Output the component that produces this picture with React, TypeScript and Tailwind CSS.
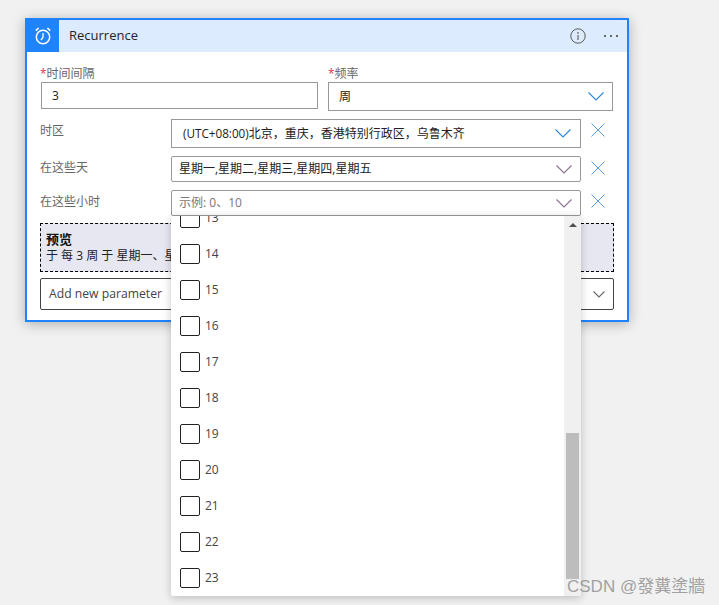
import React from "react";

const font = { fontFamily: '"Open Sans", "Noto Sans CJK SC", sans-serif' };

function Chevron({ w = 16, h = 8, color }: { w?: number; h?: number; color: string }) {
  return (
    <svg width={w} height={h + 1} viewBox={`0 0 ${w} ${h + 1}`} fill="none" className="shrink-0">
      <path d={`M0.5 0.5 L${w / 2} ${h} L${w - 0.5} 0.5`} stroke={color} strokeWidth="1.1" />
    </svg>
  );
}

function Cross() {
  return (
    <svg width="14" height="14" viewBox="0 0 14 14" fill="none" className="shrink-0">
      <path d="M0.5 0.5 L13.5 13.5 M13.5 0.5 L0.5 13.5" stroke="#5b9be4" strokeWidth="1" />
    </svg>
  );
}

function AlarmIcon() {
  return (
    <svg width="16" height="18" viewBox="0 0 16 18" fill="none">
      <circle cx="8" cy="10" r="6.7" stroke="white" strokeWidth="1.5" />
      <path d="M8 6 V10.2 L6 13" stroke="white" strokeWidth="1.3" />
      <path d="M0.8 3.6 L3.6 1 M15.2 3.6 L12.4 1" stroke="white" strokeWidth="1.6" />
    </svg>
  );
}

function InfoIcon() {
  return (
    <svg width="16" height="16" viewBox="0 0 16 16" fill="none">
      <circle cx="8" cy="8" r="7.2" stroke="#5a5a5a" strokeWidth="1" />
      <path d="M8 7 V12" stroke="#5a5a5a" strokeWidth="1.1" />
      <circle cx="8" cy="4.9" r="0.8" fill="#5a5a5a" />
    </svg>
  );
}

const hours = ["13", "14", "15", "16", "17", "18", "19", "20", "21", "22", "23"];

export default function App() {
  return (
    <div
      className="relative h-[605px] w-[719px] overflow-hidden bg-[#f1f1f1] pl-[25px] pt-[18px] text-[12px] text-[#333]"
      style={font}
    >
      <div className="w-[604px] border-2 border-[#1f84fb] bg-white shadow-[0_2px_12px_rgba(0,0,0,0.28)]">
        <div className="flex h-8 items-center bg-[#dcebfe]">
          <div className="flex h-8 w-8 items-center justify-center bg-[#1f84fb]">
            <AlarmIcon />
          </div>
          <span className="ml-[10px] text-[13px] text-[#252525]">Recurrence</span>
          <div className="ml-auto flex items-center">
            <InfoIcon />
            <div className="ml-[18px] mr-[9px] flex gap-[4px]">
              <span className="h-[2px] w-[2px] bg-[#666]" />
              <span className="h-[2px] w-[2px] bg-[#666]" />
              <span className="h-[2px] w-[2px] bg-[#666]" />
            </div>
          </div>
        </div>

        <div className="pb-[10px] pl-[13px] pr-[13px] pt-[14px]">
          <div className="flex items-start">
            <div className="w-[278px]">
              <div className="flex h-4 items-center leading-none text-[#666]">
                <span className="text-[#e0354f]">*</span>时间间隔
              </div>
              <div className="ml-[1px] flex h-[27px] w-[277px] items-center border border-[#999] pl-[10px] text-[#222]">
                3
              </div>
            </div>
            <div className="ml-[10px] w-[285px]">
              <div className="flex h-4 items-center leading-none text-[#666]">
                <span className="text-[#e0354f]">*</span>频率
              </div>
              <div className="flex h-[29px] items-center justify-between border border-[#999] pl-[10px] pr-[8px] text-[#222]">
                周
                <Chevron color="#2f86d8" />
              </div>
            </div>
          </div>

          <div className="mt-2 flex h-[29px] items-start">
            <span className="w-[131px] pt-1 leading-4 text-[#666]">时区</span>
            <div className="flex h-[29px] w-[410px] items-center justify-between border border-[#999] pl-[11px] pr-[9px] text-[#222]">
              <span>
                <span className="text-[11.7px]">(UTC+08:00)</span>北京，重庆，香港特别行政区，乌鲁木齐
              </span>
              <Chevron color="#2f86d8" />
            </div>
            <div className="ml-[10px] mt-[4px] flex">
              <Cross />
            </div>
          </div>

          <div className="mt-2 flex h-[26px] items-start">
            <span className="w-[131px] pt-1 leading-4 text-[#666]">在这些天</span>
            <div className="flex h-[26px] w-[410px] items-center justify-between rounded-[2px] border border-[#999] pl-2 pr-2 text-[#222]">
              <span className="-ml-[1px]">星期一,星期二,星期三,星期四,星期五</span>
              <Chevron color="#8a6f8c" />
            </div>
            <div className="ml-[10px] mt-[5px] flex">
              <Cross />
            </div>
          </div>

          <div className="relative z-10 mt-2 flex h-[26px] items-start">
            <span className="w-[131px] pt-1 leading-4 text-[#666]">在这些小时</span>
            <div className="relative h-[26px] w-[410px]">
              <div className="flex h-[26px] items-center justify-between rounded-[2px] border border-[#999] bg-white pl-2 pr-2 text-[#777]">
                <span className="-ml-[1px]">示例: 0、10</span>
                <Chevron color="#8a6f8c" />
              </div>
              <div className="absolute left-0 top-full flex h-[380px] w-[410px] overflow-hidden rounded-b-[2px] bg-white shadow-[0_2px_8px_rgba(0,0,0,0.22)]">
                <div className="flex-1 overflow-hidden pl-[9px]">
                  <div className="-mt-2 flex flex-col gap-4">
                    {hours.map((h) => (
                      <div key={h} className="flex h-5 items-center">
                        <span className="h-5 w-5 rounded-[2px] border-[1.5px] border-[#222] bg-white" />
                        <span className="ml-[5px] text-[#444]">{h}</span>
                      </div>
                    ))}
                  </div>
                </div>
                <div className="flex h-full w-[17px] flex-col items-center bg-[#f0f0f0]">
                  <span className="mt-[7px] h-0 w-0 border-x-[4px] border-b-[4px] border-x-transparent border-b-[#505050]" />
                  <span className="mt-[206px] h-[146px] w-[13px] bg-[#bdbdbd]" />
                </div>
              </div>
            </div>
            <div className="ml-[10px] mt-[4px] flex">
              <Cross />
            </div>
          </div>

          <div className="mt-[7px] h-[49px] w-[574px] border border-dashed border-black bg-[#e7e7f2] pl-[5px] pt-[7px] text-[#222]">
            <div className="text-[13px] font-bold leading-[17px] text-[#111]">预览</div>
            <div className="leading-4">于 每 3 周 于 星期一、星期二、星期三、星期四、星期五</div>
          </div>

          <div className="mt-[6px] flex h-8 w-[574px] items-center justify-between rounded-[2px] border border-[#444] pl-2 pr-2 text-[#444]">
            <span className="text-[12.2px]">Add new parameter</span>
            <Chevron w={12} h={6} color="#666" />
          </div>
        </div>
      </div>

      <span
        className="absolute left-[567px] top-[577px] z-20 text-[17px] leading-5 text-[#8a8a8a]/80"
        style={{ fontFamily: '"Liberation Sans", "Noto Sans CJK TC", sans-serif' }}
      >
        CSDN @發糞塗牆
      </span>
    </div>
  );
}
